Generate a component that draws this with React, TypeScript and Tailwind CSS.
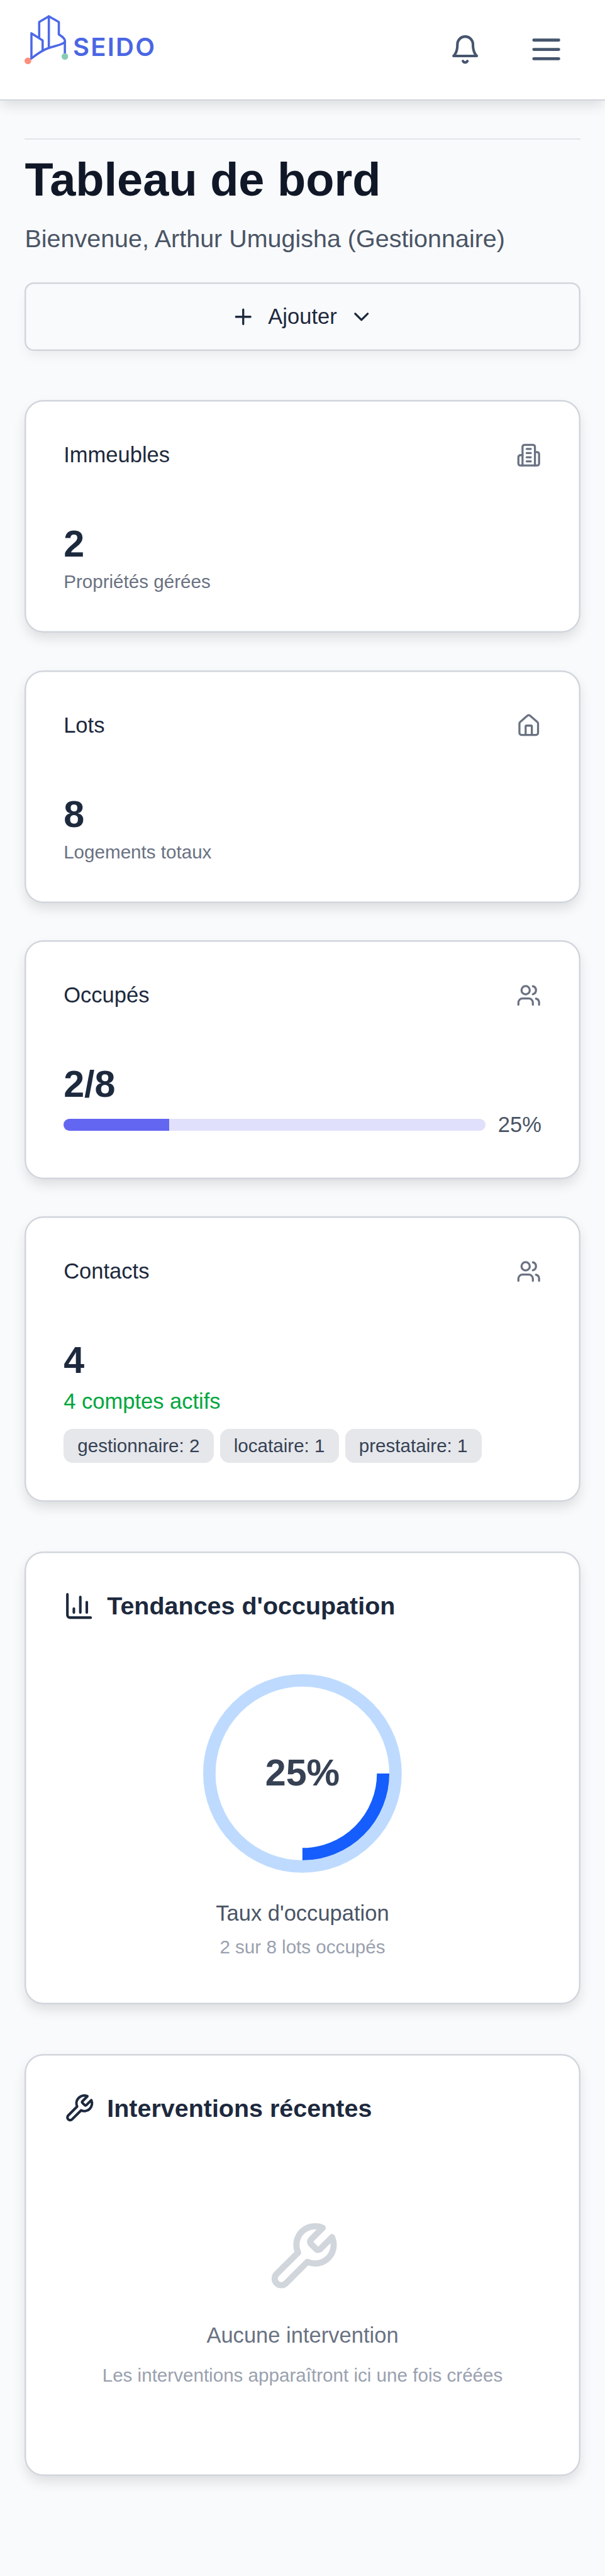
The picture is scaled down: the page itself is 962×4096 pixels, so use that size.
import type { ReactNode } from "react";

function Icon({ className, children }: { className: string; children: ReactNode }) {
  return (
    <svg
      viewBox="0 0 24 24"
      fill="none"
      stroke="currentColor"
      strokeWidth={2}
      strokeLinecap="round"
      strokeLinejoin="round"
      className={"shrink-0 " + className}
    >
      {children}
    </svg>
  );
}

const BellIcon = () => (
  <Icon className="size-5">
    <path d="M6 8a6 6 0 0 1 12 0c0 7 3 9 3 9H3s3-2 3-9" />
    <path d="M10.3 21a1.94 1.94 0 0 0 3.4 0" />
  </Icon>
);

const MenuIcon = () => (
  <Icon className="size-6">
    <path d="M4 6h16M4 12h16M4 18h16" />
  </Icon>
);

const BuildingIcon = () => (
  <Icon className="size-4 text-gray-500">
    <path d="M6 22V4a2 2 0 0 1 2-2h8a2 2 0 0 1 2 2v18Z" />
    <path d="M6 12H4a2 2 0 0 0-2 2v6a2 2 0 0 0 2 2h2" />
    <path d="M18 9h2a2 2 0 0 1 2 2v9a2 2 0 0 1-2 2h-2" />
    <path d="M10 6h4M10 10h4M10 14h4M10 18h4" />
  </Icon>
);

const HomeIcon = () => (
  <Icon className="size-4 text-gray-500">
    <path d="M15 21v-8a1 1 0 0 0-1-1h-4a1 1 0 0 0-1 1v8" />
    <path d="M3 10a2 2 0 0 1 .709-1.528l7-5.999a2 2 0 0 1 2.582 0l7 5.999A2 2 0 0 1 21 10v9a2 2 0 0 1-2 2H5a2 2 0 0 1-2-2z" />
  </Icon>
);

const UsersIcon = () => (
  <Icon className="size-4 text-gray-500">
    <path d="M16 21v-2a4 4 0 0 0-4-4H6a4 4 0 0 0-4 4v2" />
    <path d="M16 3.128a4 4 0 0 1 0 7.744" />
    <path d="M22 21v-2a4 4 0 0 0-3-3.87" />
    <circle cx="9" cy="7" r="4" />
  </Icon>
);

const ChartIcon = () => (
  <Icon className="size-5">
    <path d="M3 3v16a2 2 0 0 0 2 2h16M18 17V9M13 17V5M8 17v-3" />
  </Icon>
);

const WrenchIcon = ({ className }: { className: string }) => (
  <Icon className={className}>
    <path d="M14.7 6.3a1 1 0 0 0 0 1.4l1.6 1.6a1 1 0 0 0 1.4 0l3.77-3.77a6 6 0 0 1-7.94 7.94l-6.91 6.91a2.12 2.12 0 0 1-3-3l6.91-6.91a6 6 0 0 1 7.94-7.94l-3.76 3.76z" />
  </Icon>
);

function Logo() {
  return (
    <svg viewBox="144 72 756 324" className="h-9 w-[84px] self-start mt-2" fill="none">
      <g stroke="#4c68e8" strokeWidth="13" strokeLinecap="round" strokeLinejoin="round">
        <path d="M229 218V127L285 94L343 127V199C362 211 379 222 379 238C379 254 318 267 285 277C249 288 213 315 181 340" />
        <path d="M285 94V277" />
        <path d="M184 337V192L249 233V292" />
        <path d="M378 240V315" />
      </g>
      <circle cx="163.500" cy="352" r="19.500" fill="#fd8f7c" />
      <circle cx="378" cy="326.500" r="19" fill="#88cbb6" />
      <text
        x="425"
        y="324"
        fill="#4a66e4"
        fontSize="146"
        fontWeight="600"
        textLength="474"
        className="font-['Inter',sans-serif]"
      >
        SEIDO
      </text>
    </svg>
  );
}

function Card({ className = "", children }: { className?: string; children: ReactNode }) {
  return (
    <section
      className={
        "flex flex-col rounded-xl bg-white p-[25px] shadow-[0_4px_8px_-1px_rgba(0,0,0,0.12)] ring-1 ring-inset ring-gray-300 " +
        className
      }
    >
      {children}
    </section>
  );
}

function StatCard({
  title,
  icon,
  value,
  children,
}: {
  title: string;
  icon: ReactNode;
  value: string;
  children: ReactNode;
}) {
  return (
    <Card>
      <div className="mb-[31px] flex h-[21px] items-center justify-between">
        <h3 className="text-sm text-slate-800">{title}</h3>
        {icon}
      </div>
      <div className="text-2xl font-bold text-slate-800">{value}</div>
      {children}
    </Card>
  );
}

const roles = ["gestionnaire: 2", "locataire: 1", "prestataire: 1"];

export default function App() {
  return (
    <div className="min-h-[1661px] w-full bg-[#f9fafc] font-['Liberation_Sans',Arial,sans-serif] [zoom:2.4672]">
      <header className="relative h-[65px] bg-white px-4 shadow-[0_4px_8px_-1px_rgba(0,0,0,0.12)]">
        <div className="flex h-16 items-center justify-between">
          <Logo />
          <div className="flex items-center gap-2 text-slate-600">
            <button className="flex size-11 items-center justify-center">
              <BellIcon />
            </button>
            <button className="flex size-11 items-center justify-center">
              <MenuIcon />
            </button>
          </div>
        </div>
        <div className="-mx-4 h-px bg-gray-300" />
      </header>

      <main className="px-4 pt-6">
        <div className="h-px bg-[#e3e5e8]" />
        <h1 className="mt-2 text-3xl leading-9 font-bold text-gray-900">Tableau de bord</h1>
        <p className="mt-2 text-base text-gray-600">Bienvenue, Arthur Umugisha (Gestionnaire)</p>
        <button className="mt-4 flex h-11 w-full items-center justify-center gap-2 rounded-md pt-[0.6px] text-sm text-slate-800 shadow-[0_4px_8px_-2px_rgba(0,0,0,0.07)] ring-1 ring-inset ring-gray-300">
          <Icon className="size-4">
            <path d="M5 12h14M12 5v14" />
          </Icon>
          Ajouter
          <Icon className="size-4">
            <path d="m6 9 6 6 6-6" />
          </Icon>
        </button>

        <div className="mt-8 flex flex-col gap-6">
          <StatCard title="Immeubles" icon={<BuildingIcon />} value="2">
            <p className="text-xs text-gray-500">Propriétés gérées</p>
          </StatCard>
          <StatCard title="Lots" icon={<HomeIcon />} value="8">
            <p className="text-xs text-gray-500">Logements totaux</p>
          </StatCard>
          <StatCard title="Occupés" icon={<UsersIcon />} value="2/8">
            <div className="flex items-center gap-2">
              <div className="h-2 flex-1 overflow-hidden rounded-full bg-[#e0e0fc]">
                <div className="h-full w-1/4 bg-[#6366f1]" />
              </div>
              <span className="text-sm text-gray-600">25%</span>
            </div>
          </StatCard>
          <StatCard title="Contacts" icon={<UsersIcon />} value="4">
            <p className="-mb-px text-sm leading-[21px] text-green-600">4 comptes actifs</p>
            <div className="mt-2 flex gap-1">
              {roles.map((r) => (
                <span key={r} className="rounded-md bg-gray-200 px-[9px] py-[3px] text-xs text-gray-700">
                  {r}
                </span>
              ))}
            </div>
          </StatCard>
        </div>

        <div className="mt-8 flex flex-col gap-8">
          <Card className="h-[292px]">
            <h2 className="flex items-center gap-2 text-base leading-5 font-bold text-slate-800">
              <ChartIcon />
              Tendances d'occupation
            </h2>
            <div className="flex flex-col items-center pt-[34px]">
              <div className="relative flex size-32 items-center justify-center">
                <svg viewBox="0 0 128 128" className="absolute inset-0 size-32" fill="none" strokeWidth="8">
                  <circle cx="64" cy="64" r="60" className="stroke-blue-200" />
                  <path d="M116 64A52 52 0 0 1 64 116" className="stroke-blue-600" />
                </svg>
                <span className="relative text-2xl font-bold text-gray-700">25%</span>
              </div>
              <p className="mt-4 -mb-px text-sm leading-[21px] text-gray-600">Taux d'occupation</p>
              <p className="mt-1 text-xs text-gray-400">2 sur 8 lots occupés</p>
            </div>
          </Card>

          <Card className="h-[272px]">
            <h2 className="flex items-center gap-2 text-base leading-5 font-bold text-slate-800">
              <WrenchIcon className="size-5" />
              Interventions récentes
            </h2>
            <div className="flex flex-col items-center pt-[62px]">
              <WrenchIcon className="size-12 text-gray-300" />
              <p className="mt-4 -mb-px text-sm leading-[21px] text-gray-500">Aucune intervention</p>
              <p className="mt-2 text-xs text-gray-400">Les interventions apparaîtront ici une fois créées</p>
            </div>
          </Card>
        </div>
      </main>
    </div>
  );
}
